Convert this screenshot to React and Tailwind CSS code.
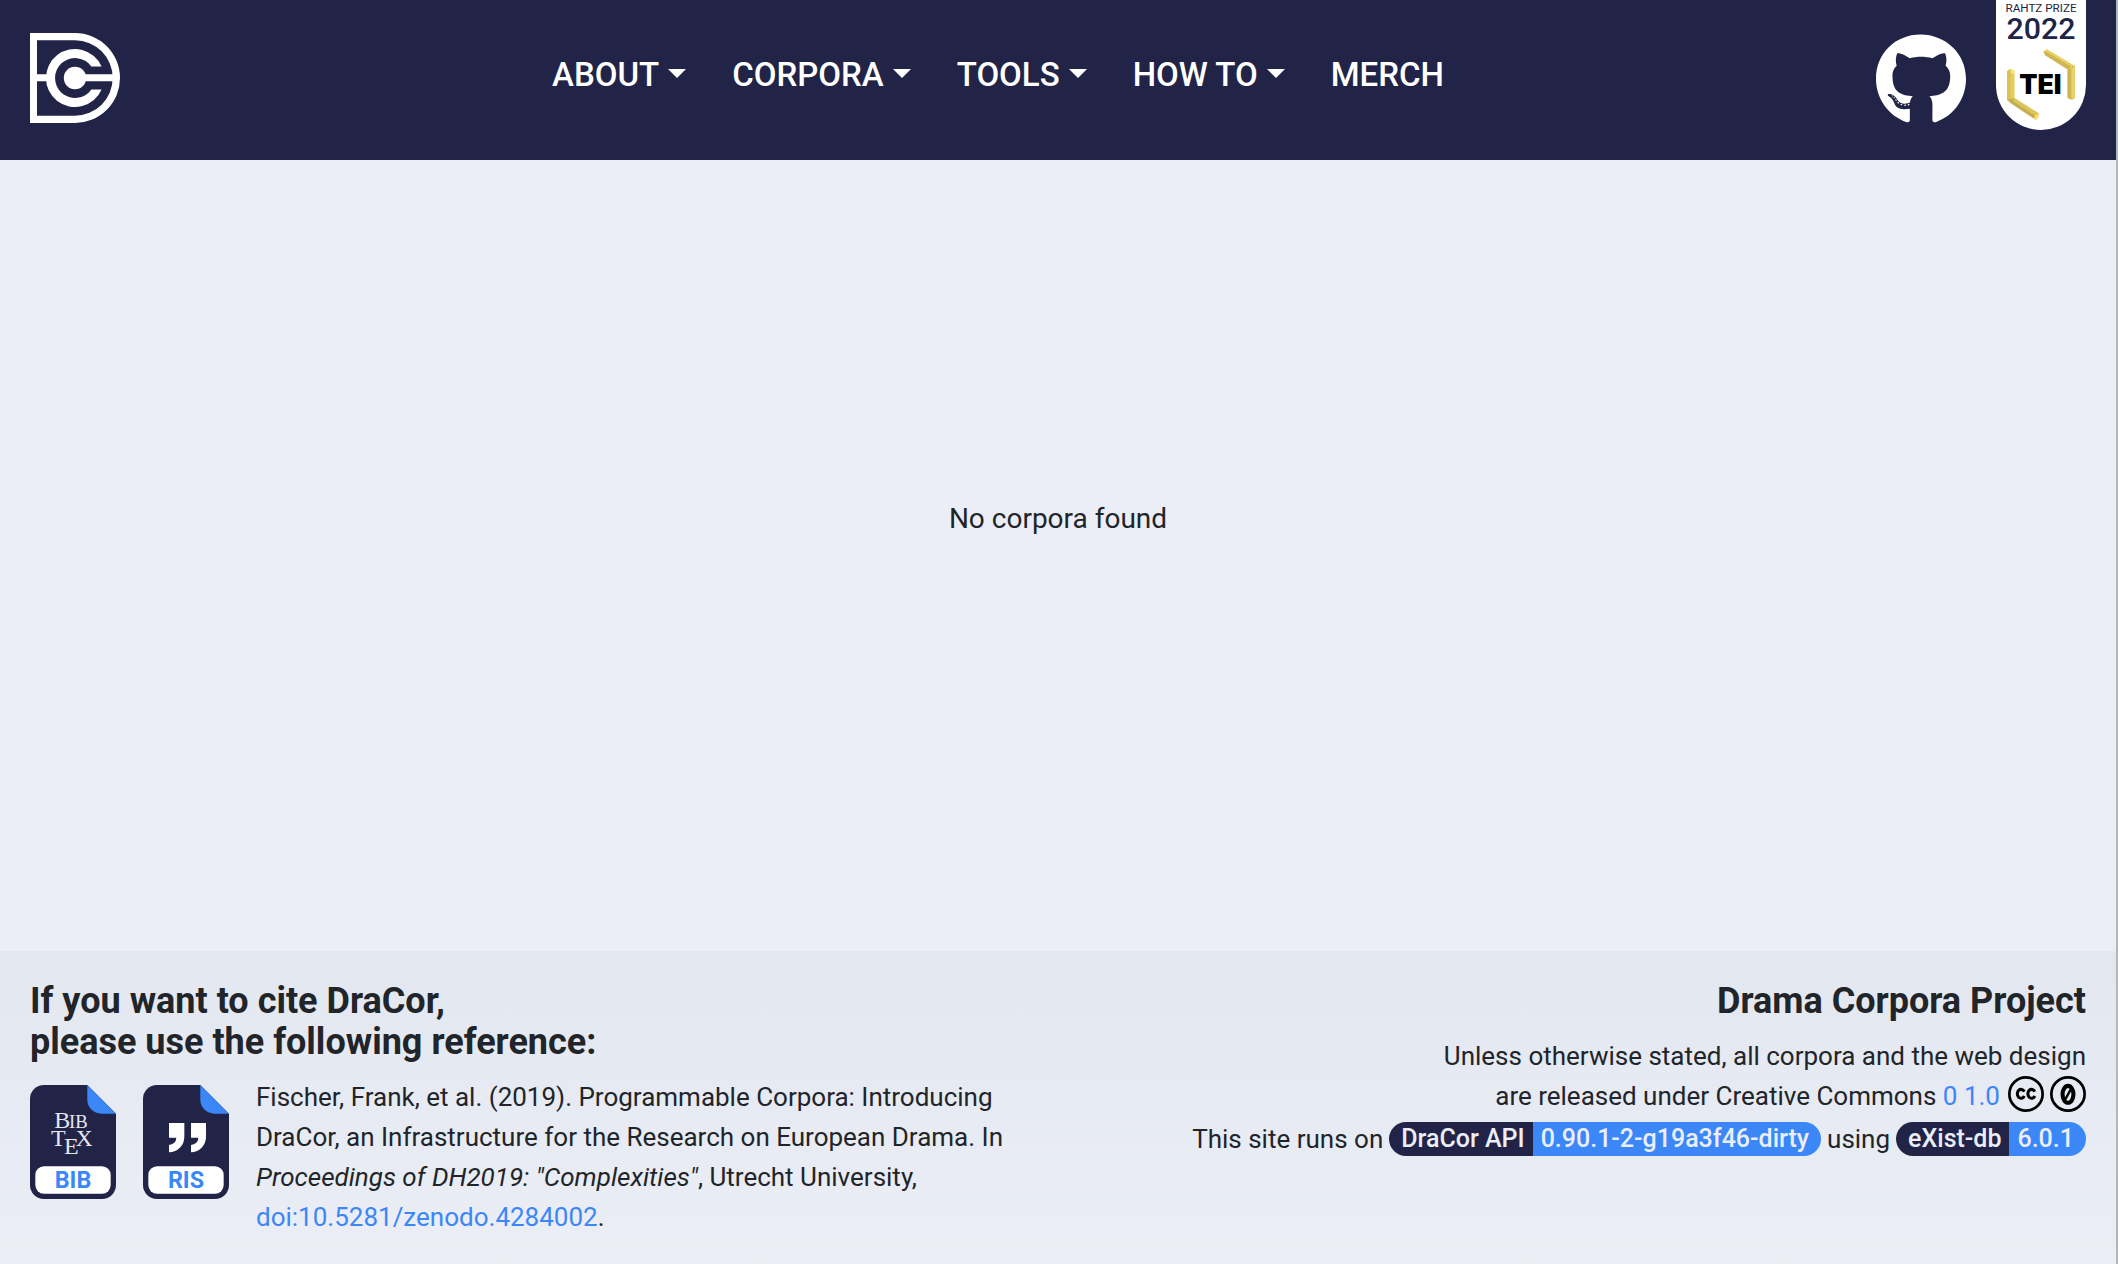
import { FaGithub } from 'react-icons/fa';

function Logo() {
  return (
    <svg viewBox="0 0 90 90" className="size-[90px]" fill="#fff" aria-hidden="true">
      <path fillRule="evenodd" d="M0 0H45A45 45 0 0 1 45 90H0ZM7 7.3V82.7H45A37.7 37.7 0 0 0 45 7.3Z" />
      <path d="M7 41.3H17V48.3H7ZM54 41.3H84V48.3H54Z" />
      <circle cx="45" cy="45" r="11.2" />
      <path d="M71.6 33.5A29 29 0 1 0 71.6 56.5H61.4A20 20 0 1 1 61.4 33.5Z" />
    </svg>
  );
}

function PrizeBadge() {
  return (
    <svg viewBox="438 0 270 390" className="w-[90px] h-[130px]" role="img" aria-label="Rahtz Prize 2022">
      <path d="M438 0H708V255A135 135 0 0 1 438 255Z" fill="#fff" />
      <text x="573" y="36" textAnchor="middle" fontFamily="Roboto, sans-serif" fontSize="35" fontWeight="400" fill="#212447">RAHTZ PRIZE</text>
      <text x="573" y="117" textAnchor="middle" fontFamily="Roboto, sans-serif" fontSize="91" fontWeight="500" fill="#212447">2022</text>
      <path d="M471 214L480 206L493 212V300L482 306L471 300Z" fill="#d9c258" />
      <path d="M480 206L493 212V226L482 218Z" fill="#fbe36d" />
      <path d="M482 218L493 224V300H482Z" fill="#e6cd5e" />
      <path d="M471 299L493 294L566 340L558 360L480 308Z" fill="#c6ae4e" />
      <path d="M493 294L567 342L562 352L490 304Z" fill="#dcc65a" />
      <path d="M560 342L567 352L558 360L552 354Z" fill="#fae16a" />
      <path d="M580 155L590 147L675 198L664 212L652 208L586 166Z" fill="#e8d063" />
      <path d="M580 155L586 166L652 208L664 200L590 155Z" fill="#cdb653" />
      <path d="M652 208L664 204L675 196V294L666 300L652 294Z" fill="#cdb653" />
      <path d="M664 206L675 198V294L664 300Z" fill="#ead266" />
      <text x="571" y="281" textAnchor="middle" fontFamily="Inter, sans-serif" fontSize="80" fontWeight="900" fill="#000">TEI</text>
    </svg>
  );
}

function FileShape({ label, children }) {
  return (
    <svg viewBox="0 0 258 342" className="w-[86px] h-[114px]" role="img" aria-label={label}>
      <path d="M42 0H172L258 86V300A42 42 0 0 1 216 342H42A42 42 0 0 1 0 300V42A42 42 0 0 1 42 0Z" fill="#212447" />
      <path d="M172 0L258 86H214A42 42 0 0 1 172 44Z" fill="#3b87f8" />
      <rect x="16" y="244" width="226" height="82" rx="26" fill="#fff" />
      {children}
      <text x="129" y="309" textAnchor="middle" fontFamily="Roboto, sans-serif" fontSize="70" fontWeight="700" fill="#3b87f8">{label}</text>
    </svg>
  );
}

function BibIcon() {
  return (
    <FileShape label="BIB">
      <g fontFamily="Liberation Serif, serif" fill="#e6e7ee">
        <text x="73" y="130" fontSize="72">B</text>
        <text x="117" y="130" fontSize="56">IB</text>
        <text x="63" y="184" fontSize="72">T</text>
        <text x="102" y="206" fontSize="72">E</text>
        <text x="137" y="184" fontSize="70">X</text>
      </g>
    </FileShape>
  );
}

function RisIcon() {
  return (
    <FileShape label="RIS">
      <path d="M78 114H124V154A46 46 0 0 1 78 202V180A22 22 0 0 0 100 158H78Z" fill="#fff" />
      <path d="M144 114H189V154A46 46 0 0 1 144 202V180A22 22 0 0 0 166 158H144Z" fill="#fff" />
    </FileShape>
  );
}

function CreativeCommonsIcon() {
  return (
    <svg viewBox="0 0 106 106" className="size-9" fill="none" stroke="#000" strokeWidth="8" aria-hidden="true">
      <circle cx="53" cy="53" r="49" />
      <path d="M48 46A11 13 0 1 0 48 59M79 46A11 13 0 1 0 79 59" strokeWidth="9" />
    </svg>
  );
}

function ZeroIcon() {
  return (
    <svg viewBox="0 0 106 106" className="size-9" fill="none" stroke="#000" strokeWidth="8" aria-hidden="true">
      <circle cx="53" cy="53" r="49" />
      <ellipse cx="53" cy="54" rx="16" ry="25" strokeWidth="12" />
      <path d="M45 69L62 38" strokeWidth="7" />
    </svg>
  );
}

const menus = ['About', 'Corpora', 'Tools', 'How to'];

function Header() {
  return (
    <header className="flex h-40 items-start justify-between bg-[#212447] px-[30px] text-white">
      <a href="#home" aria-label="DraCor" className="mt-[33px]"><Logo /></a>
      <nav className="mt-[55px] flex gap-[46px] text-[33px] leading-10 font-medium uppercase">
        {menus.map((m) => (
          <button key={m} type="button" className="flex items-center gap-[9px] uppercase">
            {m}
            <svg viewBox="0 0 18 9" className="mb-1 w-[18px] h-[9px]" fill="currentColor" aria-hidden="true"><path d="M0 0H18L9 9Z" /></svg>
          </button>
        ))}
        <a href="#merch">Merch</a>
      </nav>
      <div className="flex items-start gap-[30px]">
        <a href="#github" aria-label="GitHub" className="mt-[33px]"><FaGithub className="w-[90px] h-[93px]" /></a>
        <a href="#prize"><PrizeBadge /></a>
      </div>
    </header>
  );
}

function VersionBadge({ name, version }) {
  return (
    <a href="#version" className="inline-flex h-[34px] overflow-hidden rounded-full text-[25px] leading-[34px] font-medium text-[#ebeef7]">
      <span className="bg-[#212447] pr-2 pl-3">{name}</span>
      <span className="bg-[#3b87f8] pr-3 pl-2">{version}</span>
    </a>
  );
}

function Footer() {
  return (
    <footer className="flex justify-between bg-linear-to-b from-[#e3e7f0] to-[#ebeef5] px-[30px] pt-[30px] pb-[27px] text-[26px] leading-10">
      <section>
        <h2 className="text-[36px] leading-[41px] font-bold">If you want to cite DraCor,<br />please use the following reference:</h2>
        <div className="mt-[22px] flex items-start gap-[27px]">
          <a href="#bib"><BibIcon /></a>
          <a href="#ris"><RisIcon /></a>
          <p className="-mt-2 w-[770px]">
            Fischer, Frank, et al. (2019). Programmable Corpora: Introducing DraCor, an Infrastructure for the Research on European Drama. In <em>Proceedings of DH2019: "Complexities"</em>, Utrecht University, <a href="#doi" className="text-[#3b87f8]">doi:10.5281/zenodo.4284002</a>.
          </p>
        </div>
      </section>
      <section className="flex flex-col items-end text-right">
        <h2 className="text-[36px] leading-[41px] font-bold">Drama Corpora Project</h2>
        <p className="mt-3.5">Unless otherwise stated, all corpora and the web design</p>
        <p className="flex items-center gap-2">
          <span>are released under Creative Commons <a href="#cc0" className="text-[#3b87f8]">0 1.0</a></span>
          <span className="flex gap-1.5 pb-1">
            <CreativeCommonsIcon />
            <ZeroIcon />
          </span>
        </p>
        <p className="mt-[3px] flex items-center gap-1.5">
          This site runs on <VersionBadge name="DraCor API" version="0.90.1-2-g19a3f46-dirty" /> using <VersionBadge name="eXist-db" version="6.0.1" />
        </p>
      </section>
    </footer>
  );
}

export default function App() {
  return (
    <div className="flex min-h-screen flex-col border-r-2 border-[#b4b6bb] bg-[#ebeef7] font-['Roboto',sans-serif] text-[#212529]">
      <Header />
      <main className="flex grow items-center justify-center pb-[74px]">
        <p className="text-[28px] leading-10">No corpora found</p>
      </main>
      <Footer />
    </div>
  );
}
